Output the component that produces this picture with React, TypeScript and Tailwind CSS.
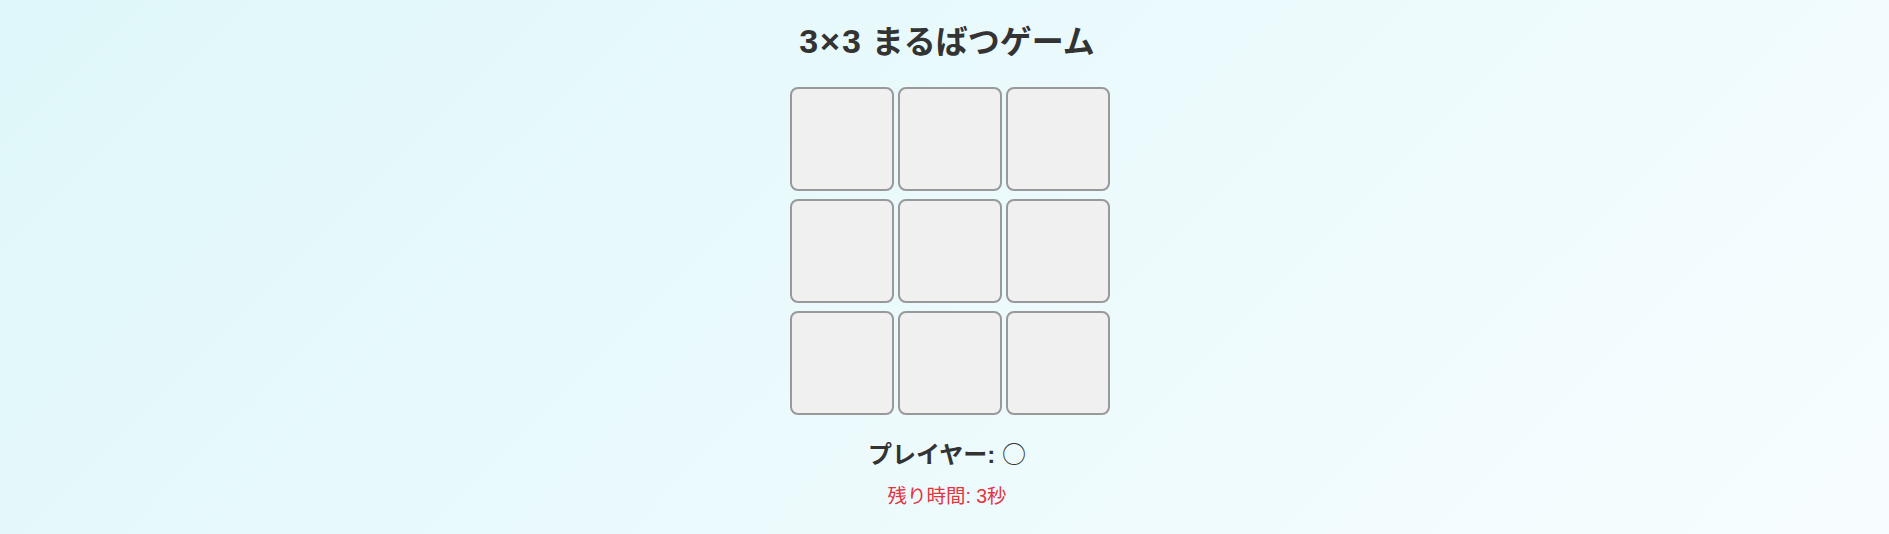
import React from "react";

export default function App() {
  const cells = Array.from({ length: 9 });
  return (
    <div
      className="min-h-[534px] w-full bg-[linear-gradient(135deg,#dff7fa_0%,#f7fdff_100%)] text-[#333]"
      style={{ fontFamily: '"Liberation Sans", "Noto Sans CJK JP", sans-serif' }}
    >
      <div className="flex flex-col items-center pl-[5px]">
        <h1 className="mt-[21px] h-[40px] text-[32px] font-bold leading-[40px]">
          <span className="text-[34px] tracking-[2px]">3×3</span> まるばつゲーム
        </h1>
        <div className="mt-[26px] ml-[6px] grid grid-cols-[repeat(3,104px)] gap-x-[4px] gap-y-[8px]">
          {cells.map((_, i) => (
            <button
              key={i}
              className="h-[104px] w-[104px] rounded-[8px] border-2 border-[#999] bg-[#f0f0f0]"
            />
          ))}
        </div>
        <h2 className="mt-[22px] h-[32px] text-[24px] font-bold leading-[32px]">
          プレイヤー:{" "}
          <span
            className="font-normal"
            style={{ fontFamily: '"Noto Sans CJK JP", sans-serif' }}
          >
            ○
          </span>
        </h2>
        <p className="mt-[13px] h-[28px] text-[19.5px] leading-[28px] text-[#e3343f]">
          残り時間: 3秒
        </p>
      </div>
    </div>
  );
}
